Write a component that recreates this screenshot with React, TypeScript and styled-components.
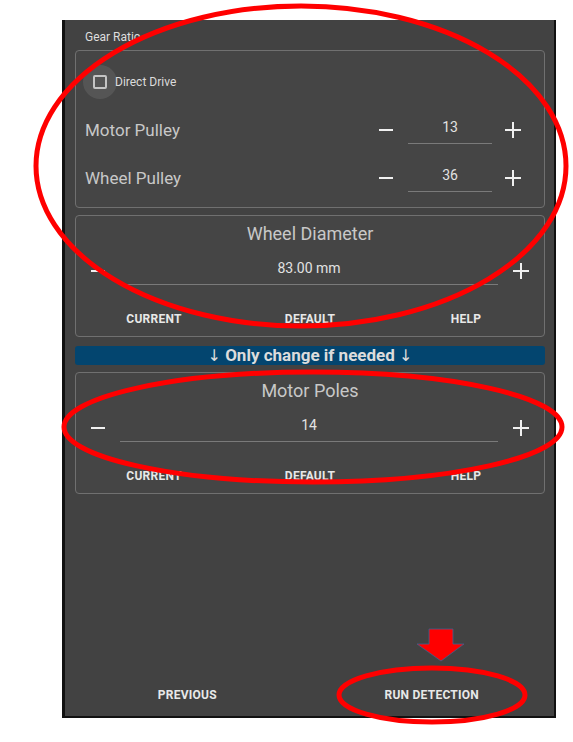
import React from "react";
import styled, { createGlobalStyle } from "styled-components";

const Global = createGlobalStyle`
  html, body { margin: 0; padding: 0; background: #ffffff; }
  body { font-family: Roboto, "Liberation Sans", sans-serif; }
  * { box-sizing: border-box; }
`;

const Page = styled.div`
  position: relative;
  width: 573px;
  height: 742px;
  padding: 20px 0 0 62px;
`;

const Panel = styled.div`
  width: 494px;
  height: 698px;
  background: #424242;
  border-left: 3px solid #111;
  border-right: 2px solid #111;
  border-bottom: 2px solid #111;
  display: flex;
  flex-direction: column;
  padding-bottom: 3px;
`;

const Body = styled.div`
  padding: 10px 9px 0 10px;
  display: flex;
  flex-direction: column;
`;

const SectionLabel = styled.div`
  font-size: 12px;
  line-height: 14px;
  color: #dedede;
  padding-left: 10px;
  margin-bottom: 6px;
`;

const Box = styled.div<{ $pad?: string; $mt?: number }>`
  border: 1px solid #707070;
  border-radius: 4px;
  background: #454545;
  padding: ${(p) => p.$pad || "0"};
  margin-top: ${(p) => p.$mt || 0}px;
  display: flex;
  flex-direction: column;
`;

const CheckRow = styled.div`
  height: 34px;
  display: flex;
  align-items: center;
  padding-left: 7px;
  margin-bottom: 7px;
`;

const CheckHalo = styled.span`
  width: 34px;
  height: 34px;
  border-radius: 50%;
  background: rgba(255, 255, 255, 0.09);
  display: flex;
  align-items: center;
  justify-content: center;
`;

const CheckSquare = styled.span`
  width: 14px;
  height: 14px;
  border: 2px solid #c4c4c4;
  border-radius: 2px;
`;

const CheckText = styled.span`
  font-size: 12px;
  color: #dcdcdc;
  margin-left: -2px;
`;

const PulleyRow = styled.div`
  height: 48px;
  display: flex;
  align-items: center;
  padding: 0 17px 0 9px;
`;

const RowLabel = styled.div`
  flex: 1;
  font-size: 17px;
  color: #c8c8c8;
`;

const StepBtn = styled.div<{ $w: number }>`
  width: ${(p) => p.$w}px;
  height: 28px;
  display: flex;
  align-items: center;
  justify-content: center;
`;

const MinusGlyph = styled.span`
  width: 14px;
  height: 2px;
  background: #f0f0f0;
`;

const PlusGlyph = styled.span`
  position: relative;
  width: 16px;
  height: 16px;
  &::before, &::after {
    content: "";
    position: absolute;
    background: #f0f0f0;
  }
  &::before { left: 0; top: 7px; width: 16px; height: 2px; }
  &::after { left: 7px; top: 0; width: 2px; height: 16px; }
`;

const Field = styled.div<{ $w?: number; $top: number; $mx?: string }>`
  ${(p) => (p.$w ? `width: ${p.$w}px;` : "flex: 1;")}
  margin: ${(p) => p.$mx || "0"};
  padding: ${(p) => p.$top}px 0 8px;
  border-bottom: 1px solid #7a7a7a;
  text-align: center;
  font-size: 14px;
  line-height: 16px;
  color: #e2e2e2;
`;

const Title = styled.div`
  text-align: center;
  font-size: 18px;
  line-height: 20px;
  color: #c8c8c8;
`;

const ValueRow = styled.div`
  display: flex;
  align-items: center;
  margin-top: 12px;
`;

const ActionRow = styled.div`
  display: grid;
  grid-template-columns: repeat(3, 1fr);
  margin-top: 16px;
`;

const TextBtn = styled.div<{ $h: number }>`
  height: ${(p) => p.$h}px;
  display: flex;
  align-items: center;
  justify-content: center;
  font-size: 12px;
  font-weight: 700;
  letter-spacing: 0.25px;
  color: #e8e8e8;
  text-transform: uppercase;
`;

const Banner = styled.div`
  margin: 9px 0 7px;
  height: 19px;
  border-radius: 3px;
  background: #03456f;
  color: #dcdcdc;
  font-size: 17px;
  font-weight: 700;
  line-height: 19px;
  text-align: center;
`;

const Arrow = styled.span`
  font-weight: 400;
  font-family: "DejaVu Sans", sans-serif;
  font-size: 16px;
`;

const Footer = styled.div`
  margin-top: auto;
  display: grid;
  grid-template-columns: 1fr 1fr;
`;

const Overlay = styled.svg`
  position: absolute;
  left: 0;
  top: 0;
  pointer-events: none;
`;

function ValueCard({ title, value, mt }: { title: string; value: string; mt?: number }) {
  return (
    <Box $pad="8px 0 0" $mt={mt}>
      <Title>{title}</Title>
      <ValueRow>
        <StepBtn $w={44}><MinusGlyph /></StepBtn>
        <Field $top={4}>{value}</Field>
        <StepBtn $w={46}><PlusGlyph /></StepBtn>
      </ValueRow>
      <ActionRow>
        <TextBtn $h={35}>Current</TextBtn>
        <TextBtn $h={35}>Default</TextBtn>
        <TextBtn $h={35}>Help</TextBtn>
      </ActionRow>
    </Box>
  );
}

function PulleyControl({ label, value }: { label: string; value: string }) {
  return (
    <PulleyRow>
      <RowLabel>{label}</RowLabel>
      <StepBtn $w={28}><MinusGlyph /></StepBtn>
      <Field $w={84} $top={2} $mx="0 7px 0 8px">{value}</Field>
      <StepBtn $w={28}><PlusGlyph /></StepBtn>
    </PulleyRow>
  );
}

export default function App() {
  return (
    <>
      <Global />
      <Page>
        <Panel>
          <Body>
            <SectionLabel>Gear Ratio</SectionLabel>
            <Box $pad="14px 0 5px">
              <CheckRow>
                <CheckHalo><CheckSquare /></CheckHalo>
                <CheckText>Direct Drive</CheckText>
              </CheckRow>
              <PulleyControl label="Motor Pulley" value="13" />
              <PulleyControl label="Wheel Pulley" value="36" />
            </Box>
            <ValueCard title="Wheel Diameter" value="83.00 mm" mt={7} />
            <Banner>
              <Arrow>↓</Arrow> Only change if needed <Arrow>↓</Arrow>
            </Banner>
            <ValueCard title="Motor Poles" value="14" />
          </Body>
          <Footer>
            <TextBtn $h={36}>Previous</TextBtn>
            <TextBtn $h={36}>Run Detection</TextBtn>
          </Footer>
        </Panel>
        <Overlay width="573" height="742" viewBox="0 0 573 742">
          <ellipse cx="301" cy="166" rx="265" ry="160" fill="none" stroke="#ff0000" strokeWidth="5" />
          <ellipse cx="313" cy="427" rx="249" ry="55" fill="none" stroke="#ff0000" strokeWidth="5" />
          <ellipse cx="432" cy="695" rx="93" ry="27" fill="none" stroke="#ff0000" strokeWidth="5" />
          <polygon
            points="429,629 453,629 453,644 464,644 441,661 417,644 429,644"
            fill="#ff0000"
            stroke="#41608f"
            strokeWidth="0.8"
          />
        </Overlay>
      </Page>
    </>
  );
}
